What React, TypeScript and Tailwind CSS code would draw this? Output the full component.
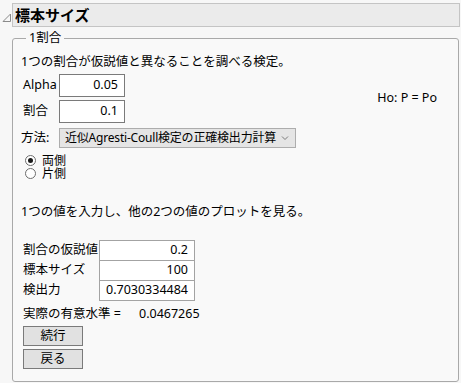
const font = "font-['Noto_Sans','Noto_Sans_CJK_JP',sans-serif]";

function NumBox({ value, className }: { value: string; className: string }) {
  return (
    <div className={`flex items-center justify-end bg-white pr-[6px] text-[12.5px] ${className}`}>
      {value}
    </div>
  );
}

function Radio({ label, checked }: { label: string; checked?: boolean }) {
  return (
    <div className="flex h-[13px] items-center">
      <span className="ml-[4px] flex h-[11px] w-[11px] items-center justify-center rounded-full border border-[#6d6d6d] bg-white">
        {checked && <span className="h-[5px] w-[5px] rounded-full bg-[#1a1a1a]" />}
      </span>
      <span className="ml-[6px] text-[12px] leading-[13px]">{label}</span>
    </div>
  );
}

export default function App() {
  return (
    <div className={`h-[383px] w-[461px] overflow-hidden bg-[#f7f7f7] text-[12px] text-black ${font}`}>
      <div className="flex items-center pt-[3px]">
        <svg width="12" height="24" viewBox="0 0 12 24" className="shrink-0">
          <path d="M3 18.5 L10.5 18.5 L10.5 11 Z" fill="none" stroke="#8a8a8a" strokeWidth="1" />
        </svg>
        <div className="flex h-[24px] w-[448px] items-center border border-[#c4c4c4] bg-[#ebebeb] pl-[2px] text-[15px] font-bold">
          標本サイズ
        </div>
      </div>

      <fieldset className="ml-[12px] mt-[4px] h-[351px] w-[447px] rounded-[3px] border border-[#a9a9a9] bg-[#f9f9f9] pl-[8px] pr-[21px]">
        <legend className="ml-[5px] px-[3px] text-[12.5px] leading-[14px]">1割合</legend>

        <p className="mt-[9px] text-[12.5px] leading-[16px]">1つの割合が仮説値と異なることを調べる検定。</p>

        <div className="mt-[4px] flex items-center">
          <div className="flex flex-col gap-[3px]">
            <div className="flex items-center">
              <span className="w-[38px] pl-[2px] text-[12.5px]">Alpha</span>
              <NumBox value="0.05" className="h-[23px] w-[66px] border border-[#7a7a7a]" />
            </div>
            <div className="flex items-center">
              <span className="w-[38px] pl-[2px] text-[12.5px]">割合</span>
              <NumBox value="0.1" className="h-[23px] w-[66px] border border-[#7a7a7a]" />
            </div>
          </div>
          <span className="ml-auto text-[12.5px]">Ho: P = Po</span>
        </div>

        <div className="mt-[5px] flex items-center">
          <span className="w-[38px] text-[12.5px]">方法:</span>
          <div className="flex h-[20px] w-[237px] items-center overflow-hidden whitespace-nowrap border border-[#adadad] bg-[#e5e5e5] pl-[5px] text-[12px] tracking-[-0.2px]">
            近似Agresti-Coull検定の正確検出力計算
            <svg width="8" height="6" viewBox="0 0 8 6" className="ml-auto mr-[6px] shrink-0">
              <path d="M1 1.5 L4 4.5 L7 1.5" fill="none" stroke="#7a7a7a" strokeWidth="1" />
            </svg>
          </div>
        </div>

        <div className="mt-[6px]">
          <Radio label="両側" checked />
          <Radio label="片側" />
        </div>

        <p className="mt-[24px] text-[12.5px] leading-[16px]">1つの値を入力し、他の2つの値のプロットを見る。</p>

        <div className="mt-[20px] flex flex-col">
          {[
            ["割合の仮説値", "0.2"],
            ["標本サイズ", "100"],
            ["検出力", "0.7030334484"],
          ].map(([label, value], i) => (
            <div key={label} className={`flex items-center ${i > 0 ? "-mt-px" : ""}`}>
              <span className="w-[78px] pl-[2px] text-[12.5px]">{label}</span>
              <NumBox value={value} className="h-[21px] w-[96px] border border-[#a3a3a3]" />
            </div>
          ))}
        </div>

        <div className="mt-[5px] flex items-center text-[12.5px] leading-[16px]">
          <span className="w-[118px] pl-[2px]">実際の有意水準 =</span>
          <span>0.0467265</span>
        </div>

        <div className="ml-[2px] mt-[4px] flex flex-col gap-[3px]">
          <button className="flex h-[20px] w-[60px] items-center justify-center border border-[#7a7a7a] bg-[#e1e1e1] text-[12.5px]">
            続行
          </button>
          <button className="flex h-[20px] w-[60px] items-center justify-center border border-[#7a7a7a] bg-[#e1e1e1] text-[12.5px]">
            戻る
          </button>
        </div>
      </fieldset>
    </div>
  );
}
